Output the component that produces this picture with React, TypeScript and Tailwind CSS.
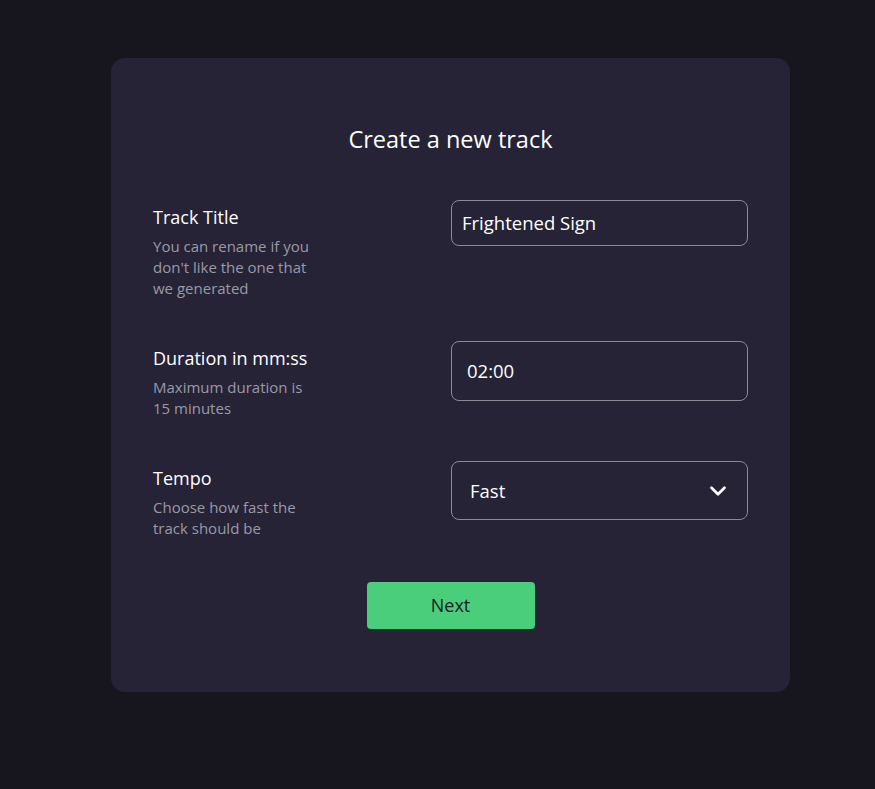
import React from "react";
import { ChevronDown } from "lucide-react";

const font = { fontFamily: "'Open Sans', 'Noto Sans', sans-serif" };

function Row({
  label,
  desc,
  children,
}: {
  label: string;
  desc: string[];
  children: React.ReactNode;
}) {
  return (
    <div className="flex items-start justify-between">
      <div className="pt-[5px]">
        <div className="text-[18px] leading-[24px] text-white">{label}</div>
        <div className="mt-[7px] text-[15px] leading-[21px] text-[#9b99a8]">
          {desc.map((d) => (
            <div key={d}>{d}</div>
          ))}
        </div>
      </div>
      {children}
    </div>
  );
}

export default function App() {
  return (
    <div className="min-h-[789px] w-full bg-[#17161f] pt-[58px] pb-[98px]" style={font}>
      <div className="ml-[111px] w-[679px] rounded-[14px] bg-[#252335] px-[42px] pt-[67px] pb-[63px]">
        <h1 className="text-center text-[23.5px] leading-[28px] text-white">Create a new track</h1>
        <div className="mt-[47px] flex flex-col gap-[42px]">
          <Row label="Track Title" desc={["You can rename if you", "don't like the one that", "we generated"]}>
            <div className="flex h-[46px] w-[297px] items-center rounded-[8px] border border-[#8c8a97] px-[10px] text-[18.5px] text-white">
              Frightened Sign
            </div>
          </Row>
          <Row label="Duration in mm:ss" desc={["Maximum duration is", "15 minutes"]}>
            <div className="flex h-[60px] w-[297px] items-center rounded-[8px] border border-[#8c8a97] px-[15px] text-[18.5px] text-white">
              02:00
            </div>
          </Row>
          <Row label="Tempo" desc={["Choose how fast the", "track should be"]}>
            <div className="flex h-[59px] w-[297px] items-center justify-between rounded-[8px] border border-[#8c8a97] pl-[18px] pr-[16px] text-[18.5px] text-white">
              <span>Fast</span>
              <ChevronDown size={26} strokeWidth={2.5} className="text-white" />
            </div>
          </Row>
        </div>
        <div className="mt-[43px] flex justify-center">
          <button className="h-[47px] w-[168px] rounded-[4px] bg-[#4bce7c] text-[18px] text-[#1d1d24]">
            Next
          </button>
        </div>
      </div>
    </div>
  );
}
